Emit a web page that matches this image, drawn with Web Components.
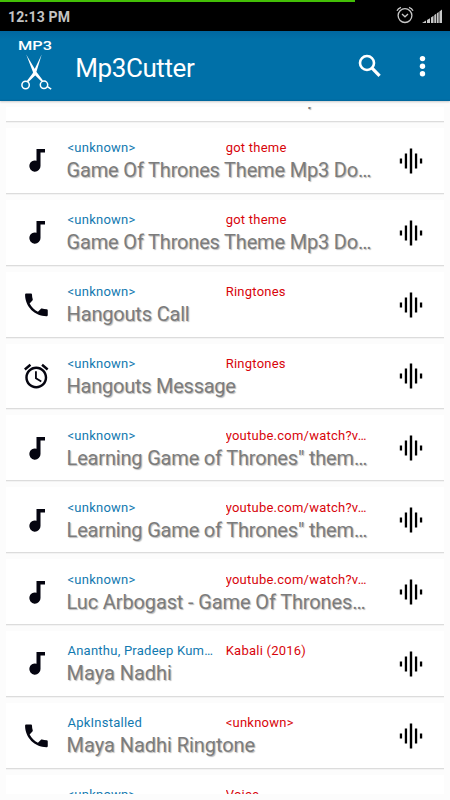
<!DOCTYPE html>
<html lang="en">
<head>
<meta charset="utf-8">
<title>Mp3Cutter</title>
<style>
html,body{margin:0;height:100%;background:#fcfcfc;font-family:Roboto,"Noto Sans",sans-serif;overflow:hidden}
</style>
</head>
<body>
<cutter-app></cutter-app>
<script>
const define = (name, html, init) => {
  const t = document.createElement('template');
  t.innerHTML = html;
  customElements.define(name, class extends HTMLElement {
    constructor() {
      super();
      this.attachShadow({mode: 'open'}).append(t.content.cloneNode(true));
    }
    connectedCallback() { if (init) init(this, this.shadowRoot); }
  });
};

define('status-bar', `
<style>
:host{display:flex;box-sizing:border-box;height:31px;color:#c4c4c4;align-items:center;padding:2px 8px 0;
  background:linear-gradient(#43bf06,#43bf06) 0 0/355px 2px no-repeat #000}
.time{flex:1;font-size:14px;line-height:20px;font-weight:700;letter-spacing:.15px}
svg{display:block}
.clock{margin:0 8px 3px 0}
.signal{margin-bottom:2px}
</style>
<span class="time"><slot></slot></span>
<svg class="clock" width="18" height="18" viewBox="0 0 18 18" fill="none" stroke="#c8c8c8" stroke-width="1.3">
<circle cx="9" cy="9.6" r="6.9"/><path d="M6 8.1l3 2.7 3-2.7"/><path d="M1 4.7Q2 2.3 5 1.4M17 4.7Q16 2.3 13 1.4"/></svg>
<svg class="signal" width="20" height="16" viewBox="0 0 20 16" fill="#c8c8c8">
<path d="M0 15L4 12.6V15zM5 12.1L8 10.2V15H5zM9 9.4L11.5 7.7V15H9zM12.3 7L14.2 5.8V15h-1.9zM14.9 5.2L16.7 4.1V15H14.9zM17.4 3.5L20 1.4V15h-2.6z"/></svg>
`);

define('app-logo', `
<style>:host{display:block;width:36px;height:56px}svg{display:block}</style>
<svg width="36" height="56" viewBox="0 0 36 56" fill="none" stroke="#fff">
<text x="0" y="9.6" font-family="Roboto" font-weight="500" font-size="13" textLength="34" lengthAdjust="spacingAndGlyphs" fill="#fff" stroke="none">MP3</text>
<path d="M8.2 14.4L18.9 32.6L25 40.5L23.4 41.6L15.6 33.8ZM23.7 14.4L17.4 35.2L10.4 42L9 40.8L14.4 33.8Z" fill="#fff" stroke="none"/>
<circle cx="7.6" cy="45" r="3.7" stroke-width="1.5"/><circle cx="26" cy="44.8" r="3.7" stroke-width="1.5"/>
<path d="M29 46.4L33.2 49.2" stroke-width="1.5"/></svg>
`);

define('tool-bar', `
<style>
:host{display:flex;box-sizing:border-box;height:70px;align-items:center;padding:0 15px 0 18px;color:#fff;
  background:linear-gradient(#0067a0,#0070a8 8px,#0070a8 68px,#00659a);box-shadow:0 1px 2px #0003}
app-logo{margin-top:3px}
.title{flex:1;margin:4px 0 0 21.2px;font-size:26px;line-height:32px;letter-spacing:-.4px;white-space:nowrap}
svg{display:block}
.more{margin-left:28px}
</style>
<app-logo></app-logo><span class="title"><slot></slot></span>
<svg width="24" height="26" viewBox="0 0 24 26" fill="none" stroke="#fff"><circle cx="9" cy="10" r="7" stroke-width="2.6"/><path d="M13.8 14.8L21.6 22.8" stroke-width="3.2"/></svg>
<svg class="more" width="25" height="26" viewBox="0 0 25 26" fill="#fff"><circle cx="12.5" cy="5.6" r="2.7"/><circle cx="12.5" cy="13.2" r="2.7"/><circle cx="12.5" cy="20.7" r="2.7"/></svg>
`);

const glyphs = {
  note: '<path d="M15.5 4H24V7.4H19.5V20.9A5.6 5.6 0 1 1 15.5 15.7z"/>',
  call: '<path transform="translate(.3 .8) scale(1.26)" d="M6.62 10.79c1.44 2.83 3.76 5.14 6.59 6.59l2.2-2.2c.27-.27.67-.36 1.02-.24 1.12.37 2.33.57 3.57.57.55 0 1 .45 1 1V20c0 .55-.45 1-1 1-9.39 0-17-7.61-17-17 0-.55.45-1 1-1h3.5c.55 0 1 .45 1 1 0 1.25.2 2.45.57 3.57.11.35.03.74-.25 1.02l-2.2 2.2z"/>',
  alarm: '<path transform="translate(.6 .6) scale(1.22)" d="M22 5.72l-4.6-3.86-1.29 1.53 4.6 3.86L22 5.72zM7.88 3.39L6.6 1.86 2 5.71l1.29 1.53 4.59-3.85zM12.5 8H11v6l4.75 2.85.75-1.23-4-2.37V8zM12 4c-4.97 0-9 4.03-9 9s4.02 9 9 9c4.97 0 9-4.03 9-9s-4.03-9-9-9zm0 16c-3.87 0-7-3.13-7-7s3.13-7 7-7 7 3.13 7 7-3.13 7-7 7z"/>'
};

define('track-row', `
<style>
:host{display:flex;box-sizing:border-box;flex:none;height:65.88px;margin-bottom:6px;background:#fff;border-bottom:1px solid #dcdcdc;
  padding:0 18px 0 15px;align-items:center;box-shadow:0 1px 0 #f3f3f3;letter-spacing:-.09px}
.icon{flex:none;width:30px;height:30px}
.icon svg{display:block;fill:#050510}
.text{flex:none;width:308px;margin:2px 0 0 15.6px}
.meta{display:grid;grid-template-columns:147px 143px;column-gap:11.2px;padding-left:.9px;font-size:13px;line-height:18px;letter-spacing:.24px}
.meta span,.name{white-space:nowrap;overflow:hidden;text-overflow:ellipsis}
.artist{color:#1279b0}
.album{color:#d8050b}
.name{font-size:20px;line-height:26px;color:#7c7c7c;text-shadow:1px 1px 1px #bbb}
.wave{margin:1px 0 0 auto;fill:#000;display:block}
</style>
<div class="icon"></div>
<div class="text"><div class="meta"><span class="artist"></span><span class="album"></span></div><div class="name"><slot></slot></div></div>
<svg class="wave" width="30" height="30" viewBox="0 0 30 30"><path d="M3.8 12.5h2.3v5H3.8zM8.8 7.5h2.3v15H8.8zM13.8 2.5h2.4v25h-2.4zM18.9 7.5h2.3v15h-2.3zM23.9 12.5h2.3v5h-2.3z"/></svg>
`, (el, root) => {
  root.querySelector('.icon').innerHTML = `<svg width="30" height="30" viewBox="0 0 30 30">${glyphs[el.getAttribute('icon')]}</svg>`;
  root.querySelector('.artist').textContent = el.getAttribute('artist');
  root.querySelector('.album').textContent = el.getAttribute('album');
});

define('track-list', `
<style>
:host{display:flex;flex-direction:column;margin:6px 6px 0;height:687px;overflow:hidden}
::slotted(:first-child){margin-top:-51px}
</style><slot></slot>
`);

define('cutter-app', `
<style>
:host{display:flex;flex-direction:column;width:450px;height:800px;overflow:hidden;background:#fcfcfc}
.w1{letter-spacing:-.18px}
.w2{letter-spacing:-.05px}
</style>
<status-bar>12:13 PM</status-bar>
<tool-bar>Mp3Cutter</tool-bar>
<track-list>
<track-row class="w1" icon="note" artist="&lt;unknown&gt;" album="got theme">Game Of Thrones Theme Mp3 Do…</track-row>
<track-row class="w1" icon="note" artist="&lt;unknown&gt;" album="got theme">Game Of Thrones Theme Mp3 Do…</track-row>
<track-row class="w1" icon="note" artist="&lt;unknown&gt;" album="got theme">Game Of Thrones Theme Mp3 Do…</track-row>
<track-row class="w1" icon="call" artist="&lt;unknown&gt;" album="Ringtones">Hangouts Call</track-row>
<track-row style="letter-spacing:-.25px" icon="alarm" artist="&lt;unknown&gt;" album="Ringtones">Hangouts Message</track-row>
<track-row class="w1" icon="note" artist="&lt;unknown&gt;" album="youtube.com/watch?v…">Learning Game of Thrones" them…</track-row>
<track-row class="w1" icon="note" artist="&lt;unknown&gt;" album="youtube.com/watch?v…">Learning Game of Thrones" them…</track-row>
<track-row style="letter-spacing:-.13px" icon="note" artist="&lt;unknown&gt;" album="youtube.com/watch?v…">Luc Arbogast - Game Of Thrones…</track-row>
<track-row class="w2" icon="note" artist="Ananthu, Pradeep Kum…" album="Kabali (2016)">Maya Nadhi</track-row>
<track-row class="w2" icon="call" artist="ApkInstalled" album="&lt;unknown&gt;">Maya Nadhi Ringtone</track-row>
<track-row icon="call" artist="&lt;unknown&gt;" album="Voice">Voice</track-row>
</track-list>
`);
</script>
</body>
</html>
